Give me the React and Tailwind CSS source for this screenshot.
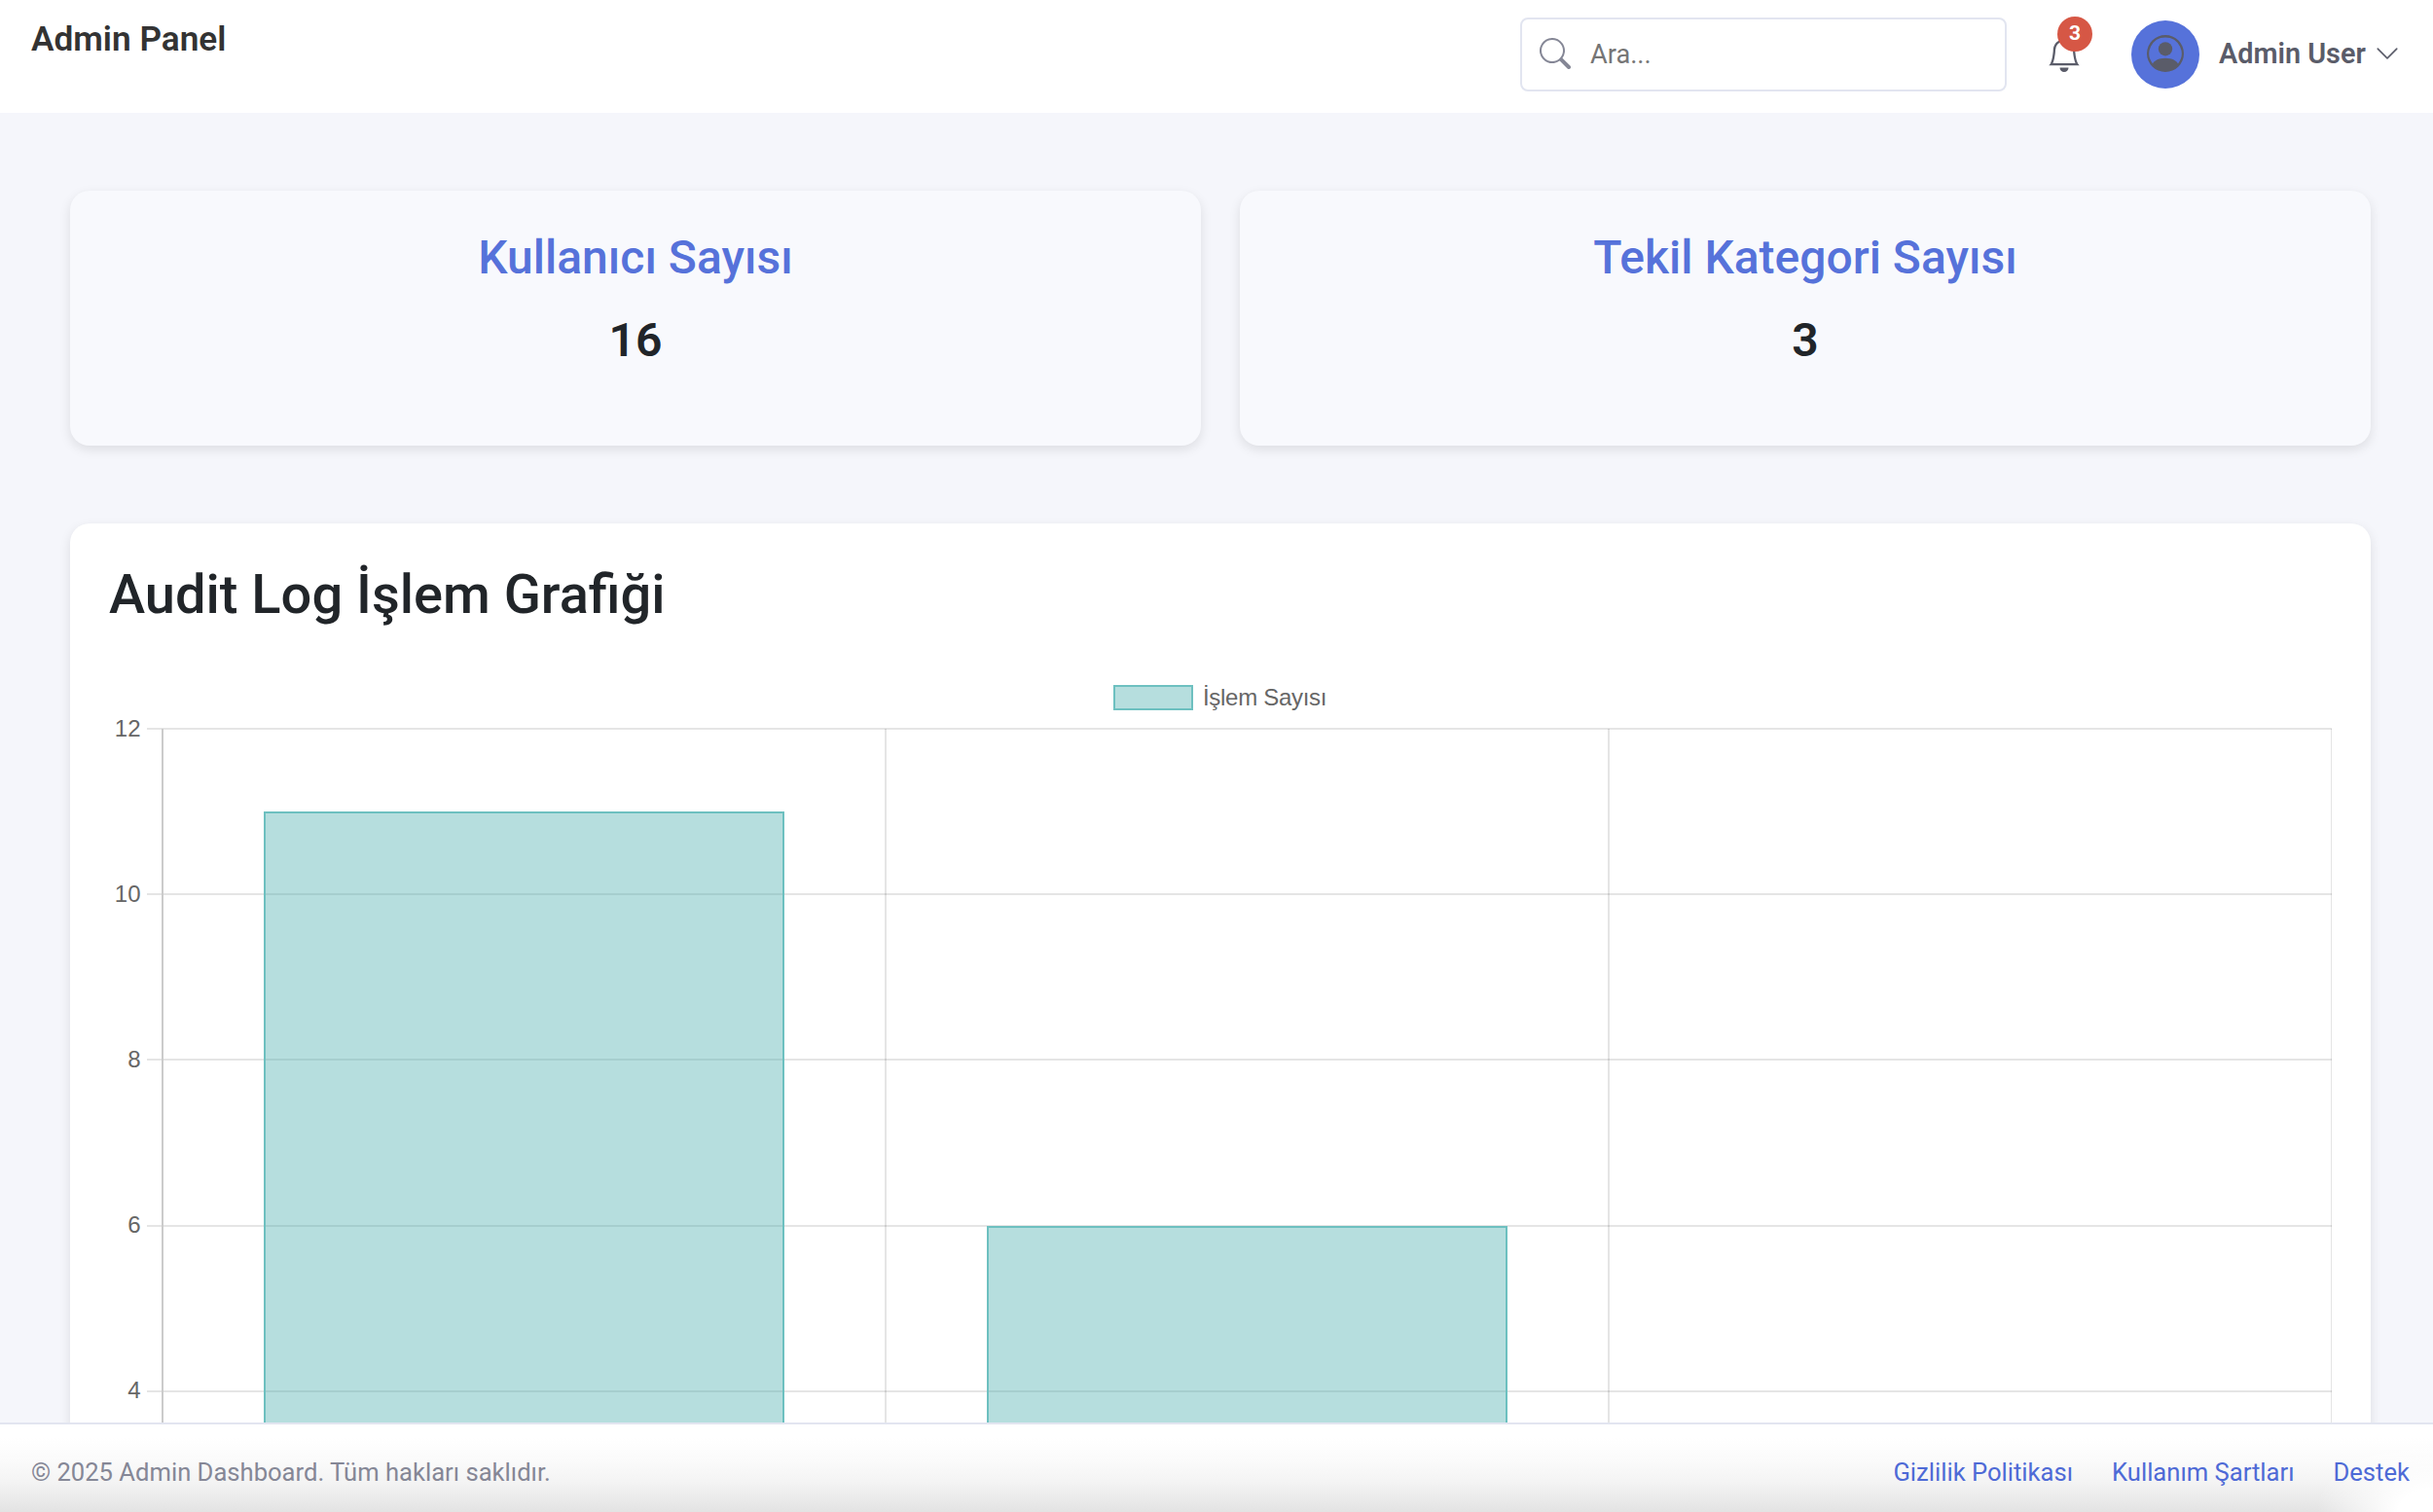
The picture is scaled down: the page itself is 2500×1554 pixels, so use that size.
const rows = [
  { v: 12, y: 748, base: 757 },
  { v: 10, y: 918, base: 927 },
  { v: 8, y: 1088, base: 1097 },
  { v: 6, y: 1259, base: 1267 },
  { v: 4, y: 1429, base: 1437 },
];
const bars = [{ x: 271, y: 834, w: 535 }, { x: 1014, y: 1260, w: 535 }];

function SearchIcon() {
  return (
    <svg className="size-8 -translate-y-px" viewBox="0 0 16 16" fill="currentColor">
      <path d="M11.742 10.344a6.5 6.5 0 1 0-1.397 1.398h-.001q.044.06.098.115l3.85 3.85a1 1 0 0 0 1.415-1.414l-3.85-3.85a1 1 0 0 0-.115-.1zM12 6.5a5.5 5.5 0 1 1-11 0 5.5 5.5 0 0 1 11 0" />
    </svg>
  );
}
function BellIcon() {
  return (
    <svg className="size-9" viewBox="0 0 16 16" fill="currentColor">
      <path d="M8 16a2 2 0 0 0 2-2H6a2 2 0 0 0 2 2M8 1.918l-.797.161A4 4 0 0 0 4 6c0 .628-.134 2.197-.459 3.742-.16.767-.376 1.566-.663 2.258h10.244c-.287-.692-.502-1.49-.663-2.258C12.134 8.197 12 6.628 12 6a4 4 0 0 0-3.203-3.92zM14.22 12c.223.447.481.801.78 1H1c.299-.199.557-.553.78-1C2.68 10.2 3 6.88 3 6c0-2.42 1.72-4.44 4.005-4.901a1 1 0 1 1 1.99 0A5 5 0 0 1 13 6c0 .88.32 4.2 1.22 6" />
    </svg>
  );
}
function PersonIcon() {
  return (
    <svg className="size-[38px] -translate-y-px" viewBox="0 0 16 16" fill="currentColor">
      <path d="M11 6a3 3 0 1 1-6 0 3 3 0 0 1 6 0" />
      <path fillRule="evenodd" d="M0 8a8 8 0 1 1 16 0A8 8 0 0 1 0 8m8-7a7 7 0 0 0-5.468 11.37C3.242 11.226 4.805 10 8 10s4.757 1.225 5.468 2.37A7 7 0 0 0 8 1" />
    </svg>
  );
}
function ChevronIcon() {
  return (
    <svg className="ml-2 size-[26px] -translate-y-px text-[#5a5c69]" viewBox="0 0 16 16" fill="currentColor">
      <path fillRule="evenodd" d="M1.646 4.646a.5.5 0 0 1 .708 0L8 10.293l5.646-5.647a.5.5 0 0 1 .708.708l-6 6a.5.5 0 0 1-.708 0l-6-6a.5.5 0 0 1 0-.708" />
    </svg>
  );
}

function StatCard({ title, value }) {
  return (
    <div className="flex h-[262px] flex-1 flex-col items-center rounded-[20px] bg-[#f8f9fd] pt-10 shadow-[0_4px_12px_rgba(0,0,0,0.1)]">
      <h4 className="text-[48px] leading-[58px] font-medium text-[#5672da]">{title}</h4>
      <p className="mt-5 text-[48px] leading-[72px] font-semibold text-[#212529]">{value}</p>
    </div>
  );
}

function Chart() {
  return (
    <svg className="block" width="2284" height="900" viewBox="112 700 2284 900" fontFamily="'Liberation Sans', Arial, sans-serif" fontSize="24" fill="#666">
      {rows.map((r) => (
        <g key={r.v}>
          <rect x="151" y={r.y} width="2245" height="2" fill="#e5e5e5" />
          <text x="144.5" y={r.base} textAnchor="end">{r.v}</text>
        </g>
      ))}
      <rect x="166" y="749" width="2" height="900" fill="#cbcbcb" />
      <rect x="909" y="749" width="2" height="900" fill="#000" fillOpacity="0.1" />
      <rect x="1652" y="749" width="2" height="900" fill="#000" fillOpacity="0.1" />
      <rect x="2395" y="749" width="1" height="900" fill="#000" fillOpacity="0.1" />
      {bars.map((b) => (
        <g key={b.x}>
          <rect x={b.x} y={b.y} width={b.w} height="900" fill="#48adad" fillOpacity="0.4" />
          <rect x={b.x + 1} y={b.y + 1} width={b.w - 2} height="900" fill="none" stroke="#6dc0c0" strokeWidth="2" />
        </g>
      ))}
      <rect x="1145" y="705" width="80" height="24" fill="#b6dede" stroke="#6dc0c0" strokeWidth="2" />
      <text x="1236" y="725" letterSpacing="-0.3">İşlem Sayısı</text>
    </svg>
  );
}

export default function App() {
  return (
    <div className={`flex h-[1554px] w-[2500px] flex-col overflow-hidden bg-[#f5f6fb] font-["Roboto",sans-serif]`}>
      <header className="flex h-[116px] shrink-0 items-start justify-between bg-white pr-[34px] pl-8">
        <h1 className="mt-[14px] text-[35.2px] leading-[53px] font-semibold text-[#333]">Admin Panel</h1>
        <div className="mt-[18px] flex h-[76px] items-center">
          <div className="flex h-[76px] w-[500px] items-center gap-5 rounded-lg border-2 border-[#e2e5f0] pl-[18px] text-[#858796]">
            <SearchIcon />
            <span className="text-[27.2px] text-[#757575]">Ara...</span>
          </div>
          <button className="relative ml-[41px] text-[#5a5c69]">
            <BellIcon />
            <span className="absolute -top-[21px] left-[11px] flex size-9 items-center justify-center rounded-full bg-[#d65745] text-[21px] font-bold text-white">3</span>
          </button>
          <div className="ml-[51px] flex size-[70px] items-center justify-center rounded-full bg-[#5672da] text-[#5a5c69]">
            <PersonIcon />
          </div>
          <span className="ml-5 w-[152px] text-[28.8px] font-semibold whitespace-nowrap text-[#5a5c69]">Admin User</span>
          <ChevronIcon />
        </div>
      </header>
      <main className="min-h-0 flex-1 overflow-hidden pt-20 pr-16 pl-[72px]">
        <div className="flex gap-10">
          <StatCard title="Kullanıcı Sayısı" value="16" />
          <StatCard title="Tekil Kategori Sayısı" value="3" />
        </div>
        <section className="mt-20 h-[1200px] rounded-[20px] bg-white px-10 pt-10 shadow-[0_4px_12px_rgba(0,0,0,0.1)]">
          <h3 className="mb-[55px] text-[56px] leading-[67px] font-medium text-[#212529]">Audit Log İşlem Grafiği</h3>
          <Chart />
        </section>
      </main>
      <footer className="z-10 flex h-[92px] shrink-0 items-center justify-between border-t-2 border-[#e2e5f0] bg-[radial-gradient(ellipse_120px_80px_at_100%_100%,white_30%,transparent),linear-gradient(to_bottom,white_15%,#fbfbfb_40%,#f4f4f4_65%,#e3e3e3)] pt-2 pr-6 pl-8 text-[25.6px]">
        <span className="text-[#858796]">© 2025 Admin Dashboard. Tüm hakları saklıdır.</span>
        <nav className="flex gap-10 text-[#4e6ad6]">
          <a>Gizlilik Politikası</a>
          <a>Kullanım Şartları</a>
          <a>Destek</a>
        </nav>
      </footer>
    </div>
  );
}
